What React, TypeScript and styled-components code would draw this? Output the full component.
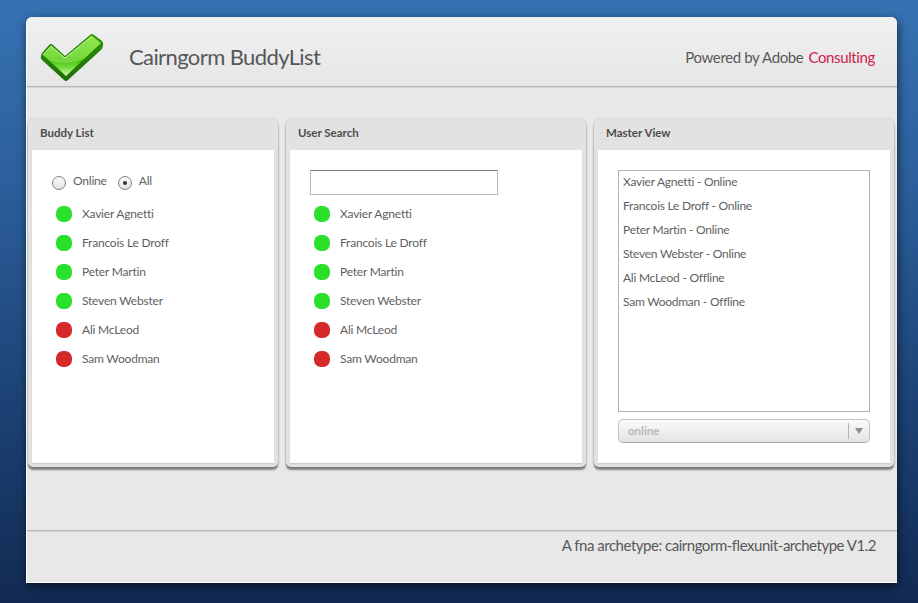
import React from 'react'
import styled, { createGlobalStyle } from 'styled-components'

const fontStack = `Lato, 'Open Sans', sans-serif`

const GlobalStyle = createGlobalStyle`
    html, body {
        margin: 0;
        padding: 0;
        height: 100%;
    }
    body {
        font-family: ${fontStack};
        font-variant-ligatures: none;
        background: linear-gradient(#3672b2 0%, #2c5f9c 30%, #1b4072 70%, #122a52 100%);
        overflow: hidden;
    }
    #root {
        height: 100%;
    }
`

const Stage = styled.div`
    height: 603px;
    padding: 17px 21px 20px 26px;
    box-sizing: border-box;
`

const Window = styled.div`
    width: 871px;
    height: 566px;
    box-sizing: border-box;
    display: flex;
    flex-direction: column;
    background: #e8e8e8;
    border-radius: 6px 6px 0 0;
    border-left: 1px solid #fff;
    border-bottom: 1px solid #fff;
    box-shadow: 1px 3px 10px rgba(0, 0, 0, 0.6);
`

const Header = styled.header`
    height: 70px;
    box-sizing: border-box;
    flex: none;
    display: flex;
    align-items: center;
    padding: 12px 22px 0 13px;
    background: linear-gradient(#f0f0f0, #e6e6e6);
    border-bottom: 1px solid #b8b8b8;
    box-shadow: 0 1px 0 #d6d6d6;
    border-radius: 6px 6px 0 0;
`

const Logo = styled.svg`
    width: 64px;
    height: 50px;
    flex: none;
`

const Title = styled.h1`
    margin: 0 0 2px 25px;
    font-size: 22px;
    font-weight: 400;
    letter-spacing: -0.6px;
    color: #55565a;
    flex: 1;
`

const Powered = styled.div`
    margin-bottom: 2px;
    font-size: 15px;
    letter-spacing: -0.37px;
    color: #58595b;
`

const Accent = styled.span`
    margin-left: 5px;
    color: #d2214f;
`

const Panels = styled.main`
    flex: 1;
    display: flex;
    gap: 8px;
    padding: 32px 0 0 1px;
`

const Panel = styled.section<{ $wide?: boolean }>`
    width: ${(p) => (p.$wide ? 300 : 250)}px;
    height: 348px;
    box-sizing: border-box;
    display: flex;
    flex-direction: column;
    padding: 0 4px 4px;
    background: #e2e2e2;
    border-radius: 5px;
    box-shadow: 0 3px 2px rgba(0, 0, 0, 0.45), 0 0 2px rgba(0, 0, 0, 0.2);
`

const PanelTitle = styled.h2`
    margin: 0;
    height: 31px;
    box-sizing: border-box;
    flex: none;
    display: flex;
    align-items: center;
    padding: 0 0 5px 8px;
    font-size: 11.5px;
    font-weight: 700;
    color: #4d4d4f;
`

const PanelBody = styled.div`
    flex: 1;
    background: #fff;
    padding: 20px;
    display: flex;
    flex-direction: column;
    box-shadow: 0 1px 1px rgba(0, 0, 0, 0.1);
`

const RadioRow = styled.div`
    display: flex;
    align-items: center;
    height: 25px;
    margin-bottom: 4px;
`

const RadioLabel = styled.span`
    margin: -4px 11px 0 7px;
    font-size: 12px;
    letter-spacing: -0.2px;
    color: #5f5f62;
`

const Radio = styled.span<{ $checked?: boolean }>`
    width: 14px;
    height: 14px;
    box-sizing: border-box;
    flex: none;
    display: flex;
    align-items: center;
    justify-content: center;
    border: 1px solid #7f7f7f;
    border-radius: 50%;
    background: linear-gradient(#fafafa, #e4e4e4);

    &:after {
        content: '';
        display: ${(p) => (p.$checked ? 'block' : 'none')};
        width: 4px;
        height: 4px;
        border-radius: 50%;
        background: #333;
    }
`

const SearchBox = styled.input`
    display: block;
    width: 188px;
    height: 25px;
    box-sizing: border-box;
    margin: 0 0 4px;
    padding: 0 4px;
    border: 1px solid #b8b8b8;
    border-top-color: #777;
    background: #fff;
    outline: none;
`

const Buddies = styled.ul`
    margin: 0;
    padding: 0 0 0 4px;
    list-style: none;
`

const Buddy = styled.li`
    height: 29px;
    display: flex;
    align-items: center;
    font-size: 12px;
    letter-spacing: -0.2px;
    color: #5f5f62;
`

const Status = styled.span<{ $online: boolean }>`
    width: 16px;
    height: 16px;
    flex: none;
    margin-right: 10px;
    border-radius: 7px;
    background: ${(p) => (p.$online ? '#2be02b' : '#d62a2a')};
`

const MasterList = styled.ul`
    width: 252px;
    height: 242px;
    box-sizing: border-box;
    margin: 0 0 7px;
    padding: 0 4px;
    list-style: none;
    border: 1px solid #b3b3b3;
`

const MasterRow = styled.li`
    height: 24px;
    box-sizing: border-box;
    padding-bottom: 4px;
    display: flex;
    align-items: center;
    font-size: 12px;
    letter-spacing: -0.25px;
    color: #5f5f62;
`

const Combo = styled.div`
    width: 252px;
    height: 24px;
    box-sizing: border-box;
    display: flex;
    align-items: center;
    padding-left: 9px;
    border: 1px solid #c2c2c2;
    border-bottom-color: #a8a8a8;
    border-radius: 5px;
    background: linear-gradient(#fbfbfb, #e3e3e3);
`

const ComboText = styled.span`
    flex: 1;
    margin-bottom: 1px;
    font-size: 11.5px;
    font-weight: 700;
    color: #b4b8b8;
`

const ComboArrow = styled.span`
    width: 20px;
    height: 16px;
    display: flex;
    align-items: center;
    justify-content: center;
    border-left: 1px solid #b4b4b4;

    &:after {
        content: '';
        border-left: 4px solid transparent;
        border-right: 4px solid transparent;
        border-top: 6px solid #8d8d8d;
    }
`

const Footer = styled.footer`
    height: 52px;
    flex: none;
    display: flex;
    justify-content: flex-end;
    padding: 5px 21px 0 0;
    box-sizing: border-box;
    border-top: 1px solid #b8b8b8;
    box-shadow: inset 0 1px 0 #d6d6d6;
    font-size: 15px;
    letter-spacing: -0.48px;
    color: #58595b;
`

const buddies = [
    { name: 'Xavier Agnetti', online: true },
    { name: 'Francois Le Droff', online: true },
    { name: 'Peter Martin', online: true },
    { name: 'Steven Webster', online: true },
    { name: 'Ali McLeod', online: false },
    { name: 'Sam Woodman', online: false },
]

const CheckLogo = () => (
    <Logo viewBox="0 0 64 50">
        <defs>
            <linearGradient id="face" x1="0" y1="0" x2="0" y2="1">
                <stop offset="0" stopColor="#6fdc20" />
                <stop offset="0.5" stopColor="#45c804" />
                <stop offset="0.58" stopColor="#3dc000" />
                <stop offset="0.8" stopColor="#78dc44" />
                <stop offset="1" stopColor="#d8f8c0" />
            </linearGradient>
            <linearGradient id="side" x1="0" y1="0" x2="0" y2="1">
                <stop offset="0" stopColor="#2c9606" />
                <stop offset="1" stopColor="#1f6d04" />
            </linearGradient>
        </defs>
        <path d="M1 23 Q1 21 3 19 L9 12 Q11 10 13 12 L25 23 L50 2 Q52 0 54 2 L62 8 Q64 10 63 13 L62 16 L28 47 Q26 49 24 47 L2 27 Q0 25 1 23 Z" fill="url(#side)" />
        <path d="M3 22 L11 13 L25 25 L52 3 L61 10 L26 43 Z" fill="url(#face)" />
        <path d="M3 22 L11 13 L25 25 L52 3 L61 10 L44 26 Q26 32 10 28 Z" fill="#d8ffb0" opacity="0.35" />
        <path d="M3 22 L11 13 L25 25 L52 3" fill="none" stroke="#c8f8a0" strokeWidth="1" />
    </Logo>
)

const BuddyRows = () => (
    <Buddies>
        {buddies.map((b) => (
            <Buddy key={b.name}>
                <Status $online={b.online} />
                {b.name}
            </Buddy>
        ))}
    </Buddies>
)

export default function App() {
    return (
        <Stage>
            <GlobalStyle />
            <Window>
                <Header>
                    <CheckLogo />
                    <Title>Cairngorm BuddyList</Title>
                    <Powered>
                        Powered by Adobe<Accent>Consulting</Accent>
                    </Powered>
                </Header>
                <Panels>
                    <Panel>
                        <PanelTitle>Buddy List</PanelTitle>
                        <PanelBody>
                            <RadioRow>
                                <Radio />
                                <RadioLabel>Online</RadioLabel>
                                <Radio $checked />
                                <RadioLabel>All</RadioLabel>
                            </RadioRow>
                            <BuddyRows />
                        </PanelBody>
                    </Panel>
                    <Panel $wide>
                        <PanelTitle>User Search</PanelTitle>
                        <PanelBody>
                            <SearchBox />
                            <BuddyRows />
                        </PanelBody>
                    </Panel>
                    <Panel $wide>
                        <PanelTitle>Master View</PanelTitle>
                        <PanelBody>
                            <MasterList>
                                {buddies.map((b) => (
                                    <MasterRow key={b.name}>
                                        {b.name} - {b.online ? 'Online' : 'Offline'}
                                    </MasterRow>
                                ))}
                            </MasterList>
                            <Combo>
                                <ComboText>online</ComboText>
                                <ComboArrow />
                            </Combo>
                        </PanelBody>
                    </Panel>
                </Panels>
                <Footer>A fna archetype: cairngorm-flexunit-archetype V1.2</Footer>
            </Window>
        </Stage>
    )
}
